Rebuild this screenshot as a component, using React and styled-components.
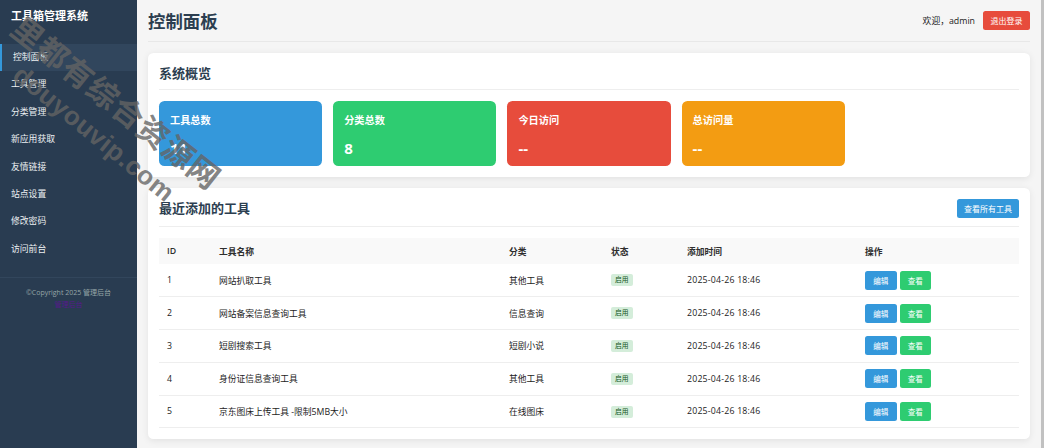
import React from "react";
import styled, { createGlobalStyle } from "styled-components";

const GlobalStyle = createGlobalStyle`
  html, body {
    margin: 0;
    padding: 0;
    height: 448px;
    overflow: hidden;
    background: #f5f5f5;
  }
  body {
    font-family: "Open Sans", "Noto Sans CJK SC", sans-serif;
    color: #333;
  }
`;

const Page = styled.div`
  position: relative;
  display: flex;
  width: 1044px;
  height: 448px;
  overflow: hidden;
`;

const Sidebar = styled.aside`
  flex: 0 0 137px;
  background: #293c51;
  color: #ecf0f1;
`;

const Brand = styled.h1`
  margin: 0;
  height: 44px;
  padding: 8px 11px 0;
  box-sizing: border-box;
  font-size: 11px;
  line-height: 15px;
  font-weight: 700;
  color: #fff;
`;

const NavList = styled.nav`
  display: flex;
  flex-direction: column;
  padding-bottom: 14px;
  border-bottom: 1px solid #32465c;
`;

const NavItem = styled.a`
  display: block;
  height: 27.4px;
  line-height: 27.4px;
  padding-left: 11px;
  border-left: ${(p) => (p.$active ? "2px solid #3498db" : "0")};
  background: ${(p) => (p.$active ? "#31465d" : "transparent")};
  font-size: 8.8px;
  color: #ecf0f1;
`;

const SideFooter = styled.div`
  padding-top: 9px;
  text-align: center;
  font-size: 7px;
  line-height: 12px;
  color: #95a5a6;
`;

const FooterLink = styled.a`
  display: block;
  color: #551a8b;
`;

const Main = styled.main`
  flex: 1;
  min-width: 0;
  padding: 0 11px;
  display: flex;
  flex-direction: column;
`;

const ScrollTrack = styled.div`
  flex: 0 0 3px;
  background: #c1c1c1;
`;

const Header = styled.header`
  flex: none;
  display: flex;
  justify-content: space-between;
  align-items: center;
  height: 41px;
  margin-bottom: 11px;
  border-bottom: 1px solid #e8e8e8;
`;

const PageTitle = styled.h2`
  margin: 0;
  font-size: 17.4px;
  font-weight: 700;
  color: #2c3e50;
`;

const UserBox = styled.div`
  display: flex;
  align-items: center;
  gap: 8px;
  font-size: 8.8px;
  color: #222;
`;

const Button = styled.button`
  flex: none;
  border: 0;
  padding: 0;
  height: 19px;
  width: ${(p) => p.$w || "31.5px"};
  border-radius: 2.5px;
  background: ${(p) => p.$bg || "#3498db"};
  color: #fff;
  font-family: inherit;
  font-size: ${(p) => p.$size || "7.6px"};
`;

const Card = styled.section`
  flex: none;
  background: #fff;
  border-radius: 5.5px;
  box-shadow: 0 1.5px 7px rgba(0, 0, 0, 0.08);
  padding: 11px;
  margin-bottom: 11px;
`;

const CardHead = styled.div`
  display: flex;
  justify-content: space-between;
  align-items: flex-start;
  height: ${(p) => p.$h}px;
  margin-bottom: 11px;
  border-bottom: 1px solid #eee;
`;

const CardTitle = styled.h3`
  margin: 0;
  font-size: 13px;
  line-height: 19px;
  font-weight: 700;
  color: #2c3e50;
`;

const StatGrid = styled.div`
  display: grid;
  grid-template-columns: repeat(5, 1fr);
  gap: 11px;
`;

const StatCard = styled.div`
  height: 65px;
  box-sizing: border-box;
  padding: 11px;
  border-radius: 5.5px;
  background: ${(p) => p.$bg};
  color: #fff;
`;

const StatLabel = styled.div`
  font-size: 10.2px;
  line-height: 16px;
  font-weight: 700;
`;

const StatValue = styled.div`
  margin-top: 11px;
  font-size: 15px;
  line-height: 18px;
  font-weight: 700;
`;

const Table = styled.table`
  width: 100%;
  table-layout: fixed;
  border-collapse: collapse;
  font-size: 8.75px;
  color: #1c1c1c;
`;

const HeadRow = styled.tr`
  height: 26px;
  background: #f9f9f9;
`;

const Th = styled.th`
  box-sizing: border-box;
  padding: 0 8px;
  text-align: left;
  font-weight: 600;
  color: #2e2e2e;
  width: ${(p) => p.$w};
`;

const Row = styled.tr`
  height: 32.75px;
  border-bottom: 1px solid #eee;
`;

const Td = styled.td`
  padding: 0 8px;
  white-space: nowrap;
`;

const DateText = styled.span`
  letter-spacing: 0.2px;
`;

const Badge = styled.span`
  display: inline-block;
  padding: 0 4px;
  height: 12px;
  line-height: 12px;
  border-radius: 2px;
  background: #d4edda;
  color: #155724;
  font-size: 6.8px;
  vertical-align: middle;
`;

const Actions = styled.div`
  display: flex;
  gap: 3px;
`;

const WatermarkText = styled.div`
  position: absolute;
  left: ${(p) => p.$x}px;
  top: ${(p) => p.$y}px;
  transform: rotate(${(p) => p.$angle}deg);
  transform-origin: left center;
  white-space: nowrap;
  font-family: "Liberation Sans", "Noto Sans CJK SC", sans-serif;
  font-size: ${(p) => p.$size}px;
  letter-spacing: ${(p) => p.$spacing || 0}px;
  line-height: 1;
  font-weight: 700;
  color: rgba(100, 100, 100, 0.8);
  pointer-events: none;
`;

const navItems = [
  "控制面板",
  "工具管理",
  "分类管理",
  "新应用获取",
  "友情链接",
  "站点设置",
  "修改密码",
  "访问前台",
];

const stats = [
  { label: "工具总数", value: "11", color: "#3498db" },
  { label: "分类总数", value: "8", color: "#2ecc71" },
  { label: "今日访问", value: "--", color: "#e74c3c" },
  { label: "总访问量", value: "--", color: "#f39c12" },
];

const tools = [
  { id: 1, name: "网站扒取工具", category: "其他工具" },
  { id: 2, name: "网站备案信息查询工具", category: "信息查询" },
  { id: 3, name: "短剧搜索工具", category: "短剧小说" },
  { id: 4, name: "身份证信息查询工具", category: "其他工具" },
  { id: 5, name: "京东图床上传工具 -限制5MB大小", category: "在线图床" },
];

const App = () => {
  return (
    <Page>
      <GlobalStyle />
      <Sidebar>
        <Brand>工具箱管理系统</Brand>
        <NavList>
          {navItems.map((item, i) => (
            <NavItem key={item} $active={i === 0}>
              {item}
            </NavItem>
          ))}
        </NavList>
        <SideFooter>
          ©Copyright 2025 管理后台
          <FooterLink>管理后台</FooterLink>
        </SideFooter>
      </Sidebar>
      <Main>
        <Header>
          <PageTitle>控制面板</PageTitle>
          <UserBox>
            <span>欢迎，admin</span>
            <Button $bg="#e74c3c" $w="47px" $size="8px">
              退出登录
            </Button>
          </UserBox>
        </Header>
        <Card>
          <CardHead $h={25}>
            <CardTitle>系统概览</CardTitle>
          </CardHead>
          <StatGrid>
            {stats.map((s) => (
              <StatCard key={s.label} $bg={s.color}>
                <StatLabel>{s.label}</StatLabel>
                <StatValue>{s.value}</StatValue>
              </StatCard>
            ))}
          </StatGrid>
        </Card>
        <Card>
          <CardHead $h={27}>
            <CardTitle>最近添加的工具</CardTitle>
            <Button $w="62px" $size="8px">
              查看所有工具
            </Button>
          </CardHead>
          <Table>
            <thead>
              <HeadRow>
                <Th $w="52px">ID</Th>
                <Th $w="290px">工具名称</Th>
                <Th $w="102px">分类</Th>
                <Th $w="76px">状态</Th>
                <Th $w="178px">添加时间</Th>
                <Th>操作</Th>
              </HeadRow>
            </thead>
            <tbody>
              {tools.map((t) => (
                <Row key={t.id}>
                  <Td>{t.id}</Td>
                  <Td>{t.name}</Td>
                  <Td>{t.category}</Td>
                  <Td>
                    <Badge>启用</Badge>
                  </Td>
                  <Td>
                    <DateText>2025-04-26 18:46</DateText>
                  </Td>
                  <Td>
                    <Actions>
                      <Button>编辑</Button>
                      <Button $bg="#2ecc71">查看</Button>
                    </Actions>
                  </Td>
                </Row>
              ))}
            </tbody>
          </Table>
        </Card>
      </Main>
      <ScrollTrack />
      <WatermarkText $x={15} $y={9} $angle={38.3} $size={31} $spacing={1}>
        里都有综合资源网
      </WatermarkText>
      <WatermarkText $x={17} $y={58} $angle={39} $size={26} $spacing={0.5}>
        douyouvip.com
      </WatermarkText>
    </Page>
  );
};

export default App;
